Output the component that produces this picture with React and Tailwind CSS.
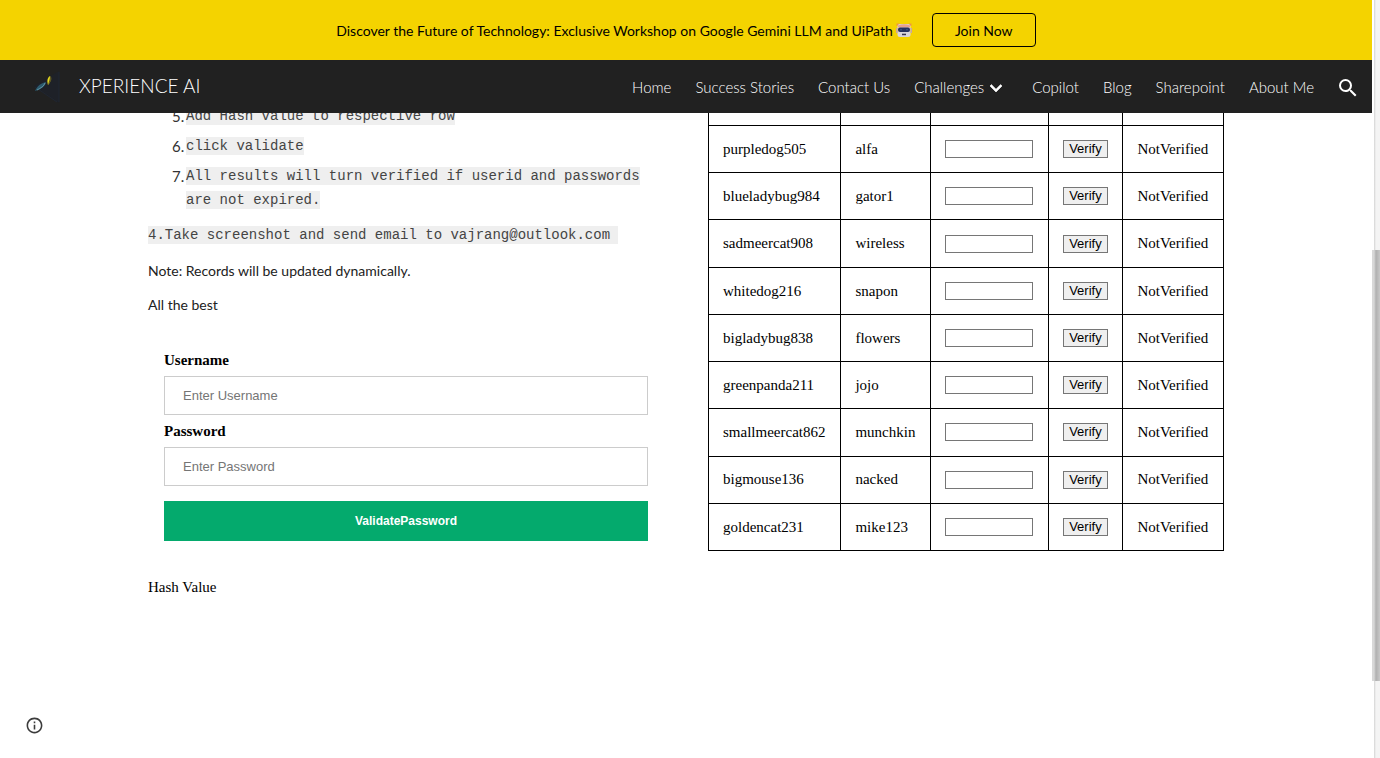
import React from 'react';

const links = ['Home', 'Success Stories', 'Contact Us', 'Challenges', 'Copilot', 'Blog', 'Sharepoint', 'About Me'];

const records = [
  ['purpledog505', 'alfa'],
  ['blueladybug984', 'gator1'],
  ['sadmeercat908', 'wireless'],
  ['whitedog216', 'snapon'],
  ['bigladybug838', 'flowers'],
  ['greenpanda211', 'jojo'],
  ['smallmeercat862', 'munchkin'],
  ['bigmouse136', 'nacked'],
  ['goldencat231', 'mike123'],
];

const cell = 'border border-black px-[14px] py-0 whitespace-nowrap';

function Robot() {
  return (
    <svg className="h-4 w-4" viewBox="0 0 16 16" role="img" aria-label="robot">
      <path d="M.5 1.500h3v2.500h-3zM12.500 1.500h3v2.500h-3z" fill="#f0983a" />
      <rect x="1.500" y="2" width="13" height="13" rx="2.500" fill="#d9d5dd" />
      <path d="M2 3.500Q8 1 14 3.500V5.500H2z" fill="#e8a08a" />
      <rect x="0" y="6" width="1.500" height="5" fill="#c9a6a0" />
      <rect x="14.500" y="6" width="1.500" height="5" fill="#c9a6a0" />
      <rect x="2" y="5.500" width="12" height="4.500" rx="2" fill="#27305e" />
      <circle cx="5" cy="7.700" r=".8" fill="#3f5b95" />
      <circle cx="11" cy="7.700" r=".8" fill="#3f5b95" />
      <rect x="6" y="11.700" width="4" height="1.500" fill="#3b3550" />
    </svg>
  );
}

function Logo() {
  return (
    <svg className="h-9 w-8" viewBox="0 0 32 36" aria-hidden="true">
      <path d="M26 2v32L1 17z" fill="#1e2128" />
      <path d="M26 3v30M2 18l22 15" stroke="#1f2632" strokeWidth="1" fill="none" />
      <path d="M2 22C4 17 8 14 13 13C12 18 8 20 2 22z" fill="#2c5a6e" />
      <path d="M4 21C8 19 11 17 12 14" stroke="#5f93a2" strokeWidth="1" fill="none" />
      <path d="M15 16C14 12 14 9 17 7C18 10 18 13 15 16z" fill="#e6d91d" />
      <path d="M17 7C20 9 18 13 15 16C16 12 17 10 17 7z" fill="#5c5620" />
    </svg>
  );
}

function Code({ children }) {
  return <code className="bg-[#efefef] py-px font-['Liberation_Mono',monospace]">{children}</code>;
}

function Step({ number, children }) {
  return (
    <li className="mb-[6px] flex">
      <span className="w-[14px] shrink-0">{number}.</span>
      <span className="font-['Liberation_Mono',monospace] text-[14px] leading-6 text-[#444]">
        <Code>{children}</Code>
      </span>
    </li>
  );
}

function Field({ id, label, type }) {
  return (
    <div className="flex flex-col">
      <label htmlFor={id} className="h-8 text-[15px] leading-8 font-bold">{label}</label>
      <input
        id={id}
        type={type}
        placeholder={'Enter ' + label}
        className="h-[39px] w-full border border-[#ccc] bg-white px-[18px] font-['Liberation_Sans',sans-serif] text-[13px] placeholder:text-[#757575]"
      />
    </div>
  );
}

export default function App() {
  return (
    <div className="flex min-h-screen bg-white font-['Lato',sans-serif] text-black">
      <div className="relative min-w-0 flex-1 overflow-hidden">
        <header className="relative z-10">
          <div className="flex h-[60px] items-center justify-center bg-[#f4d300] text-black">
            <p className="flex items-center gap-[3px] text-[14px]">
              Discover the Future of Technology: Exclusive Workshop on Google Gemini LLM and UiPath <Robot />
            </p>
            <a href="#join" className="ml-5 flex h-[34px] w-[104px] items-center justify-center rounded border border-black text-[14px]">
              Join Now
            </a>
          </div>
          <div className="flex h-[53px] items-center justify-between bg-[#212121] pr-3 pl-[33px] text-white">
            <a href="#top" className="flex items-center gap-[14px] text-[19px] font-light">
              <Logo />
              XPERIENCE AI
            </a>
            <nav className="flex items-center gap-6 pt-[2px] text-[15px] font-light">
              {links.map((l) => (
                <a key={l} href={'#' + l.replace(' ', '-').toLowerCase()} className="flex items-center">
                  {l}
                  {l === 'Challenges' && (
                    <svg className="h-6 w-6" viewBox="0 0 24 24" fill="#fff" aria-hidden="true">
                      <path d="M7.410 8.590L12 13.170l4.590-4.580L18 10l-6 6-6-6z" stroke="#fff" strokeWidth=".6" />
                    </svg>
                  )}
                </a>
              ))}
              <button type="button" aria-label="Search" className="-ml-[2px]">
                <svg className="h-6 w-6" viewBox="0 0 24 24" fill="#fff" aria-hidden="true">
                  <path d="M15.500 14h-.79l-.28-.27A6.471 6.471 0 0 0 16 9.500 6.500 6.500 0 1 0 9.500 16c1.610 0 3.090-.59 4.230-1.570l.27.28v.79l5 4.990L20.490 19l-4.990-5zm-6 0C7.010 14 5 11.990 5 9.500S7.010 5 9.500 5 14 7.010 14 9.500 11.990 14 9.500 14z" />
                </svg>
              </button>
            </nav>
          </div>
        </header>

        <main className="mx-auto -mt-[9px] grid max-w-[1076px] grid-cols-2 gap-x-11">
          <section>
            <ol className="pl-6 text-[15px] leading-6 text-[#333]">
              <Step number={5}>Add Hash value to respective row</Step>
              <Step number={6}>click validate</Step>
              <Step number={7}>All results will turn verified if userid and passwords are not expired.</Step>
            </ol>
            <p className="mt-[11px] font-['Liberation_Mono',monospace] text-[14px] leading-6 whitespace-pre-wrap text-[#444]">
              <Code>{'4.Take screenshot and send email to vajrang@outlook.com '}</Code>
            </p>
            <p className="mt-3 text-[14px] leading-6 text-[#212121]">Note: Records will be updated dynamically.</p>
            <p className="mt-[10px] text-[14px] leading-6 text-[#212121]">All the best</p>
            <form className="mt-[27px] px-4 font-['Liberation_Serif',serif]" onSubmit={(e) => e.preventDefault()}>
              <Field id="username" label="Username" type="text" />
              <Field id="password" label="Password" type="password" />
              <button type="submit" className="mt-[15px] h-10 w-full bg-[#04aa6d] font-['Liberation_Sans',sans-serif] text-[12px] font-bold text-white">
                ValidatePassword
              </button>
            </form>
            <p className="mt-[34px] font-['Liberation_Serif',serif] text-[15px] leading-6">Hash Value</p>
          </section>

          <section className="-mt-[26px]">
            <table className="h-[473px] w-full border-collapse font-['Liberation_Serif',serif] text-[15px]">
              <thead>
                <tr className="h-[47px]">
                  <td className={cell} /><td className={cell} /><td className={cell} /><td className={cell} /><td className={cell} />
                </tr>
              </thead>
              <tbody>
                {records.map(([user, word]) => (
                  <tr key={user} className="h-[47px]">
                    <td className={cell}>{user}</td>
                    <td className={cell}>{word}</td>
                    <td className={cell}>
                      <input type="text" aria-label={'Hash for ' + user} className="block h-[18px] w-[88px] border border-[#767676] bg-white px-px text-[13px]" />
                    </td>
                    <td className={cell}>
                      <button type="button" className="block h-[18px] w-[45px] border border-[#767676] bg-[#efefef] font-['Liberation_Sans',sans-serif] text-[13px] leading-4">Verify</button>
                    </td>
                    <td className={cell}>NotVerified</td>
                  </tr>
                ))}
              </tbody>
            </table>
          </section>
        </main>

        <button type="button" aria-label="Site information" className="absolute bottom-[23px] left-[25px]">
          <svg className="h-[19px] w-[19px]" viewBox="0 0 24 24" fill="#3c3c3c" aria-hidden="true">
            <path d="M11 17h2v-6h-2v6zm1-15C6.480 2 2 6.480 2 12s4.480 10 10 10 10-4.480 10-10S17.520 2 12 2zm0 18c-4.410 0-8-3.590-8-8s3.590-8 8-8 8 3.590 8 8-3.590 8-8 8zM11 9h2V7h-2v2z" />
          </svg>
        </button>
      </div>
      <div className="w-2 shrink-0 bg-linear-to-r from-white from-25% via-[#d4d4d4] via-25% to-[#f4f4f4] to-50% pt-[250px]" aria-hidden="true">
        <div className="h-[431px] bg-linear-to-r from-[#d8d8d8] from-25% via-[#b0b0b0] via-50% to-[#c8c8c8]" />
      </div>
    </div>
  );
}
